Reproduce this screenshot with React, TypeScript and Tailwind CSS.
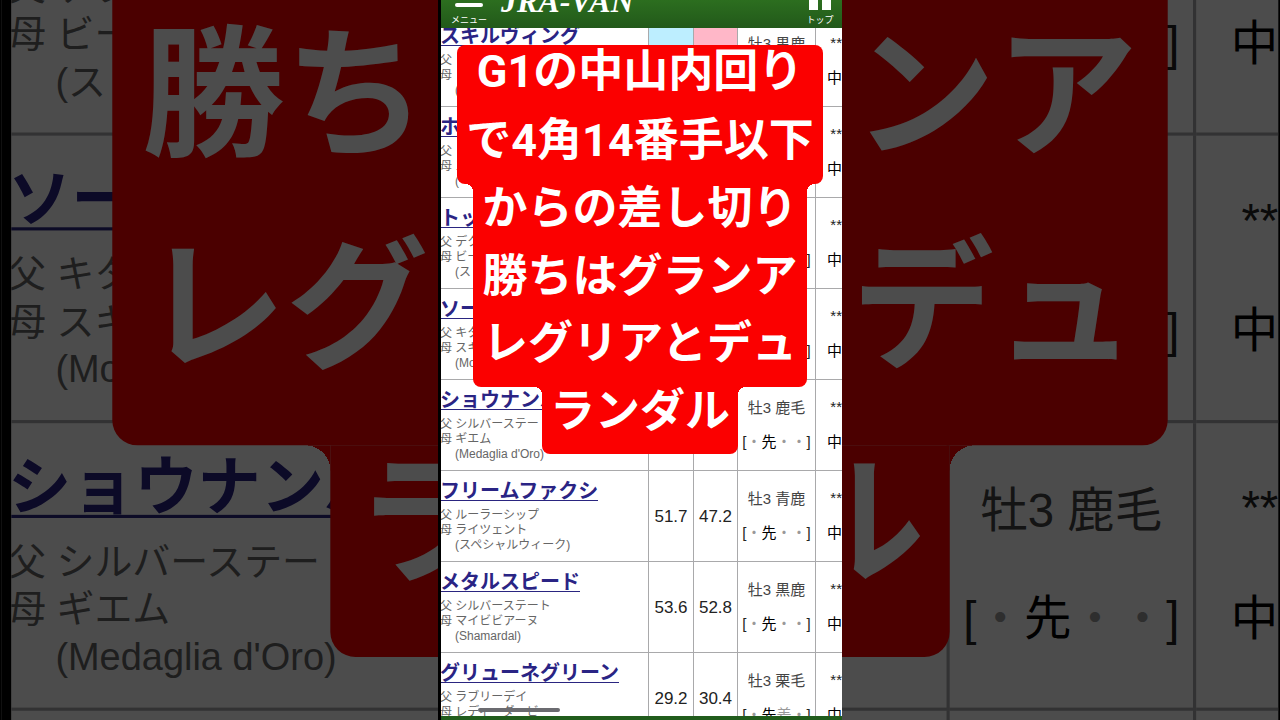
type Horse = {
  name: string;
  sire: string;
  dam: string;
  damSire: string;
  scores?: [string, string];
  coat?: string;
  style?: string[];
  highlight?: boolean;
};

const horses: Horse[] = [
  { name: "スキルヴィング", sire: "", dam: "", damSire: "(", coat: "牡3 黒鹿", highlight: true },
  { name: "ホ", sire: "", dam: "ス", damSire: "(" },
  { name: "トッ", sire: "デク", dam: "ビー", damSire: "(ス", style: ["・", "先", "・", "・"] },
  { name: "ソー", sire: "キタ", dam: "スキ", damSire: "(Mo", style: ["・", "先", "・", "・"] },
  {
    name: "ショウナンバ",
    sire: "シルバーステート",
    dam: "ギエム",
    damSire: "(Medaglia d'Oro)",
    coat: "牡3 鹿毛",
    style: ["・", "先", "・", "・"],
  },
  {
    name: "フリームファクシ",
    sire: "ルーラーシップ",
    dam: "ライツェント",
    damSire: "(スペシャルウィーク)",
    scores: ["51.7", "47.2"],
    coat: "牡3 青鹿",
    style: ["・", "先", "・", "・"],
  },
  {
    name: "メタルスピード",
    sire: "シルバーステート",
    dam: "マイビビアーヌ",
    damSire: "(Shamardal)",
    scores: ["53.6", "52.8"],
    coat: "牡3 黒鹿",
    style: ["・", "先", "・", "・"],
  },
  {
    name: "グリューネグリーン",
    sire: "ラブリーデイ",
    dam: "レディーダービー",
    damSire: "",
    scores: ["29.2", "30.4"],
    coat: "牡3 栗毛",
    style: ["・", "先", "差", "・"],
  },
];

function HorseRow({ horse }: { horse: Horse }) {
  const cell = "h-[91px] overflow-hidden border-r border-b border-[#a9a9ab]";
  return (
    <tr>
      <td className={`${cell} p-0 align-top whitespace-nowrap`}>
        <div className="-ml-px pt-[12px]">
          <a
            href="#"
            className="block w-fit border-b border-[#2a2580] text-[20px] leading-[17px] font-bold text-[#2a2484]"
          >
            {horse.name}
          </a>
          <div className="mt-[7px] text-[12px] leading-[15px] text-[#666]">
            <p>父 {horse.sire}</p>
            <p>母 {horse.dam}</p>
            <p className="pl-[15px]">{horse.damSire}</p>
          </div>
        </div>
      </td>
      <td className={`${cell} p-0 pt-[2px] text-center text-[17px] ${horse.highlight ? "bg-[#bdeeff]" : ""}`}>
        {horse.scores?.[0]}
      </td>
      <td className={`${cell} p-0 pt-[2px] text-center text-[17px] ${horse.highlight ? "bg-[#ffb7c8]" : ""}`}>
        {horse.scores?.[1]}
      </td>
      <td className={`${cell} p-0 text-center text-[15px] leading-[34px] whitespace-nowrap`}>
        <p className="h-[34px] text-[#444]">{horse.coat}</p>
        <p className="flex h-[34px] justify-center">
          {horse.style && (
            <>
              <span>[</span>
              {horse.style.map((mark, i) => (
                <span key={i} className={mark === "先" ? "text-black" : "text-[#999]"}>
                  {mark}
                </span>
              ))}
              <span>]</span>
            </>
          )}
        </p>
      </td>
      <td className="h-[91px] overflow-hidden border-b border-[#a9a9ab] p-0 text-right text-[15px] leading-[34px]">
        <p className="h-[34px] leading-[31px]">**</p>
        <p className="text-black">中</p>
      </td>
    </tr>
  );
}

function CaptionLine({ children }: { children: string }) {
  return <p className="leading-[50px]">{children}</p>;
}

function InnerCorners() {
  return (
    <>
      <span className="absolute top-0 right-full size-2 bg-[radial-gradient(circle_at_0_100%,transparent_8px,#fb0000_8px)]" />
      <span className="absolute top-0 left-full size-2 bg-[radial-gradient(circle_at_100%_100%,transparent_8px,#fb0000_8px)]" />
    </>
  );
}

function Caption() {
  return (
    <div className="absolute top-[45px] right-0 -left-[3px] flex flex-col items-center text-center font-['Roboto','Noto_Sans_CJK_JP',sans-serif] text-[45px] font-bold whitespace-nowrap text-white">
      <div className="grid h-[139px] w-[366px] auto-rows-fr rounded-lg bg-[#fb0000] pt-[2px]">
        <CaptionLine>G1の中山内回り</CaptionLine>
        <CaptionLine>で4角14番手以下</CaptionLine>
      </div>
      <div className="relative grid h-[203px] w-[334px] auto-rows-fr rounded-b-lg bg-[#fb0000]">
        <InnerCorners />
        <CaptionLine>からの差し切り</CaptionLine>
        <CaptionLine>勝ちはグランア</CaptionLine>
        <CaptionLine>レグリアとデュ</CaptionLine>
      </div>
      <div className="relative grid h-[67px] w-[196px] auto-rows-fr rounded-b-lg bg-[#fb0000]">
        <InnerCorners />
        <CaptionLine>ランダル</CaptionLine>
      </div>
    </div>
  );
}

function Header() {
  return (
    <header className="flex h-[28px] shrink-0 items-end overflow-hidden bg-linear-to-b from-[#2c6e1f] to-[#22591a] pr-[8px] pl-[10px] text-[9px] leading-[12px] text-white">
      <button className="flex shrink-0 flex-col items-center gap-[7px] pb-[2px]">
        <span className="h-[4px] w-[28px] rounded-sm bg-white" />
        メニュー
      </button>
      <span className="ml-[14px] grow pb-[12px] font-['Liberation_Serif',serif] text-[32px] leading-[30px] font-bold whitespace-nowrap italic">
        JRA-VAN
      </span>
      <a href="#" className="flex shrink-0 flex-col items-center gap-[4px] pb-[2px]">
        <svg viewBox="0 0 28 24" className="h-[24px] w-[28px] fill-white">
          <path d="M14 0 28 11h-3v13h-9V12h-4v12H3V11H0z" />
        </svg>
        トップ
      </a>
    </header>
  );
}

function PhoneScreen() {
  return (
    <div className="relative flex h-full w-[404px] flex-col overflow-hidden border-l-[3px] border-black bg-white font-['Liberation_Sans','Noto_Sans_CJK_JP',sans-serif] text-[#222]">
      <Header />
      <main className="min-h-0 grow overflow-hidden">
        <table className="-mt-[12px] w-full table-fixed border-separate border-spacing-0">
          <colgroup>
            <col className="w-[208px]" />
            <col className="w-[45px]" />
            <col className="w-[44px]" />
            <col className="w-[78px]" />
            <col />
          </colgroup>
          <tbody>
            {horses.map((horse) => (
              <HorseRow key={horse.name} horse={horse} />
            ))}
          </tbody>
        </table>
      </main>
      <footer className="h-[4px] shrink-0 bg-[#215c1c]" />
      <span className="absolute bottom-[8px] left-[37px] h-[4px] w-[82px] rounded-full bg-[#6b6b70]" />
      <Caption />
    </div>
  );
}

export default function App() {
  return (
    <div className="relative flex h-screen justify-center overflow-hidden bg-black">
      <div aria-hidden="true" inert className="absolute inset-0 flex scale-[3.16] justify-center">
        <PhoneScreen />
      </div>
      <div className="absolute inset-0 bg-black/70" />
      <div className="relative h-full">
        <PhoneScreen />
      </div>
    </div>
  );
}
